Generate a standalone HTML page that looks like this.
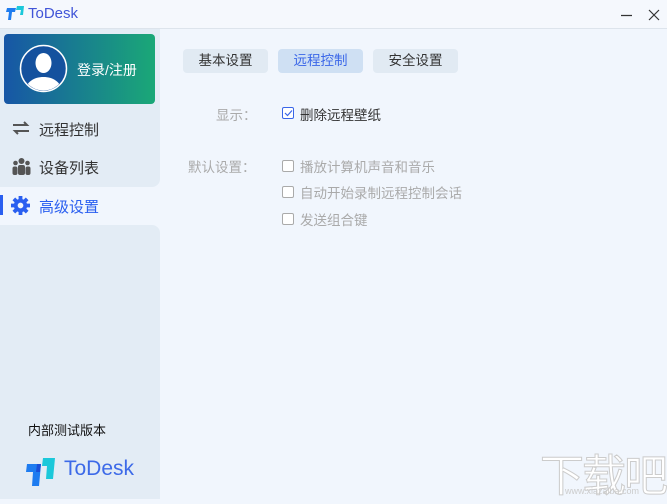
<!DOCTYPE html>
<html><head><meta charset="utf-8"><style>
*{margin:0;padding:0;box-sizing:border-box}
body{width:667px;height:499px;overflow:hidden;background:#f1f6fd;font-family:"Liberation Sans","Noto Sans CJK SC",sans-serif;position:relative}
.title{position:absolute;left:0;top:0;width:667px;height:29px;background:#f5f8fd;border-bottom:1px solid #dde4ec}
.abs{position:absolute}
.side1{left:0;top:29px;width:160px;height:158px;background:#e3ecf5;border-bottom-right-radius:8px}
.side2{left:0;top:225px;width:160px;height:274px;background:#e3ecf5;border-top-right-radius:8px}
.card{left:4px;top:34px;width:151px;height:70px;border-radius:4px;background:linear-gradient(90deg,#1756a6,#1aa877)}
.nav{font-size:15px;color:#333}
.tab{top:49px;height:24px;width:85px;border-radius:4px;background:#e1eaf3;font-size:13.5px;color:#333;text-align:center;line-height:24px}
.lbl{font-size:13.5px;color:#aaa}
.cb{width:12px;height:12px;border:1px solid #aaa;border-radius:2px;background:#fff}
.opt{font-size:13.5px;color:#aaa}
</style></head><body>
<div class="title"></div>
<svg class="abs" style="left:6px;top:5px" width="20" height="17" viewBox="0 0 20 17"><path d="M1 3h9l-1 4H6l-1 8H2l1-8H0z" fill="#1e7cf0"/><path d="M11 1h7l-1 9h-3l1-5h-5z" fill="#1bc8da"/></svg>
<div class="abs" style="left:28px;top:5px;font-size:15px;color:#4155d8">ToDesk</div>
<svg class="abs" style="left:620px;top:9px" width="40" height="12"><path d="M1 6.5h11M29 1l10 10M39 1L29 11" stroke="#333" stroke-width="1.2" fill="none"/></svg>
<div class="abs side1"></div>
<div class="abs side2"></div>
<div class="abs card"></div>
<svg class="abs" style="left:19px;top:44px" width="49" height="49" viewBox="0 0 49 49"><circle cx="24.5" cy="24.5" r="23" fill="#14519e" stroke="#fff" stroke-width="1.5"/><clipPath id="c"><circle cx="24.5" cy="24.5" r="22"/></clipPath><g clip-path="url(#c)" fill="#fff"><ellipse cx="24.5" cy="19" rx="8" ry="10"/><path d="M6 49c0-10 8-16 18.5-16S43 39 43 49z"/></g></svg>
<div class="abs" style="left:77px;top:60px;font-size:14px;color:#fff">登录/注册</div>
<svg class="abs" style="left:12px;top:121px" width="18" height="14" viewBox="0 0 18 14"><path d="M1 4h14l-3-3M17 10H3l3 3" fill="none" stroke="#555" stroke-width="2"/></svg>
<div class="abs nav" style="left:39px;top:119px">远程控制</div>
<svg class="abs" style="left:12px;top:157px" width="19" height="18" viewBox="0 0 19 18"><circle cx="9.5" cy="4" r="3" fill="#555"/><circle cx="3.5" cy="6" r="2.3" fill="#555"/><circle cx="15.5" cy="6" r="2.3" fill="#555"/><rect x="6" y="8" width="7" height="10" rx="2" fill="#555"/><rect x="0.5" y="9.5" width="5" height="8.5" rx="2" fill="#555"/><rect x="13.5" y="9.5" width="5" height="8.5" rx="2" fill="#555"/></svg>
<div class="abs nav" style="left:39px;top:157px">设备列表</div>
<div class="abs" style="left:0;top:195px;width:3px;height:20px;background:#2a5ff0"></div>
<svg class="abs" style="left:11px;top:196px" width="19" height="19" viewBox="0 0 20 20"><g fill="#2a5ff0"><circle cx="10" cy="10" r="7"/><g stroke="#2a5ff0" stroke-width="4"><path d="M10 0v20M0 10h20M3 3l14 14M17 3L3 17"/></g></g><circle cx="10" cy="10" r="3" fill="#f1f6fd"/></svg>
<div class="abs nav" style="left:39px;top:196px;color:#2a5ff0">高级设置</div>
<div class="abs" style="left:28px;top:420px;font-size:13px;color:#111">内部测试版本</div>
<svg class="abs" style="left:25px;top:457px" width="32" height="29" viewBox="0 0 32 29"><path d="M2 7h14l-2 22H7l1-14H1z" fill="#1e7cf0"/><path d="M18 1h12l-2 21h-7l1-13h-5z" fill="#1bc8da"/><path d="M16 7h-4l-1 8h4z" fill="#1a4fd8"/></svg>
<div class="abs" style="left:64px;top:457px;font-size:21px;color:#3d6ae8">ToDesk</div>
<div class="abs tab" style="left:183px">基本设置</div>
<div class="abs tab" style="left:278px;background:#cfe0f3;color:#3a66e8">远程控制</div>
<div class="abs tab" style="left:373px">安全设置</div>
<div class="abs lbl" style="left:216px;top:104px">显示：</div>
<div class="abs cb" style="left:282px;top:107px;border-color:#3a66e8"></div>
<svg class="abs" style="left:284px;top:109px" width="9" height="8"><path d="M1 4l2.5 2.5L8 1.5" fill="none" stroke="#3a66e8" stroke-width="1.2"/></svg>
<div class="abs opt" style="left:300px;top:104px;color:#333">删除远程壁纸</div>
<div class="abs lbl" style="left:188px;top:156px">默认设置：</div>
<div class="abs cb" style="left:282px;top:160px"></div>
<div class="abs opt" style="left:300px;top:156px">播放计算机声音和音乐</div>
<div class="abs cb" style="left:282px;top:186px"></div>
<div class="abs opt" style="left:300px;top:182px">自动开始录制远程控制会话</div>
<div class="abs cb" style="left:282px;top:213px"></div>
<div class="abs opt" style="left:300px;top:209px">发送组合键</div>
<div class="abs" style="left:540px;top:440px;font-size:44px;color:#fff;-webkit-text-stroke:1px #ccc;letter-spacing:-2px">下载吧</div>
<div class="abs" style="left:565px;top:486px;font-size:9px;color:#ccc">www.xiazaiba.com</div>
</body></html>
